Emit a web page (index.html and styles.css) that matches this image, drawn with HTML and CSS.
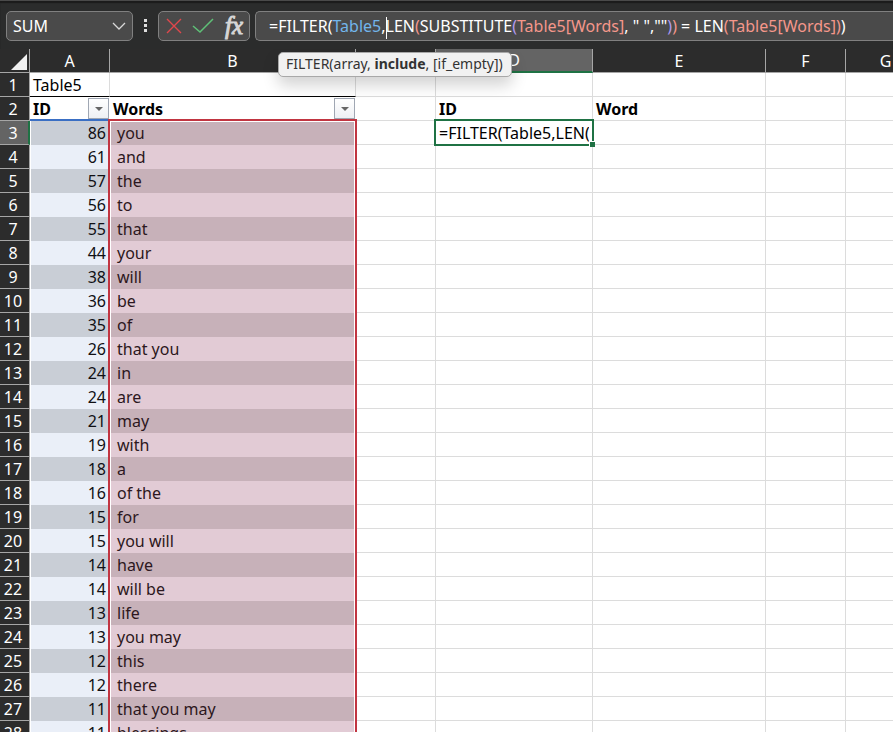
FILE: index.html
```html
<!DOCTYPE html>
<html lang="en">
<head>
<meta charset="utf-8">
<title>Table5</title>
<link rel="stylesheet" href="styles.css">
</head>
<body>
<header class="bar">
  <div class="box name">
    <input class="name-input" aria-label="Name box" value="SUM">
    <button class="plain" aria-label="Show names"><svg width="14" height="8" viewBox="0 0 14 8"><path d="M1 1l6 6 6-6" fill="none" stroke="#d8d8d8" stroke-width="1.3"/></svg></button>
  </div>
  <svg class="grip" width="3" height="14" viewBox="0 0 3 14"><path d="M0 0h3v3H0zM0 5h3v3H0zM0 10h3v3H0z" fill="#dedede"/></svg>
  <div class="box tools">
    <button class="plain" aria-label="Cancel"><svg width="16" height="16" viewBox="0 0 16 16"><path d="M1 1l14 14M15 1L1 15" fill="none" stroke="#e0474c" stroke-width="1.4"/></svg></button>
    <button class="plain" aria-label="Enter"><svg width="22" height="16" viewBox="0 0 22 16"><path d="M1 8l7 6L21 1" fill="none" stroke="#5fc077" stroke-width="1.5"/></svg></button>
    <button class="plain fx" aria-label="Insert function">fx</button>
  </div>
  <div class="box formula" role="textbox" aria-label="Formula bar" contenteditable="true" spellcheck="false">=FILTER(<span class="blue">Table5</span>,<i class="caret"></i>LEN<span class="red">(</span>SUBSTITUTE<span class="violet">(</span><span class="red">Table5[Words]</span>, " ",""<span class="violet">)</span><span class="red">)</span> = LEN<span class="red">(Table5[Words])</span>)</div>
</header>
<main class="sheet">
  <div class="hint" role="tooltip">FILTER(array, <b>include</b>, [if_empty])</div>
  <table>
    <colgroup><col class="w-row"><col class="w-s"><col class="w-b"><col class="w-s"><col class="w-d"><col class="w-e"><col class="w-s"><col class="w-s"></colgroup>
    <thead><tr><th class="corner"><svg width="16" height="16" viewBox="0 0 16 16"><path d="M16 0v16H0z" fill="#f0f0f0"/></svg></th><th>A</th><th>B</th><th>C</th><th class="on">D</th><th>E</th><th>F</th><th>G</th></tr></thead>
    <tbody id="rows">
      <tr class="title"><th>1</th><td>Table5</td><td></td><td></td><td></td><td></td><td></td><td></td></tr>
      <tr class="heads"><th>2</th><td>ID<button class="filter" aria-label="Filter ID"></button></td><td>Words<button class="filter" aria-label="Filter Words"></button></td><td></td><td>ID</td><td>Word</td><td></td><td></td></tr>
    </tbody>
  </table>
</main>
<script src="script.js"></script>
</body>
</html>
```
FILE: styles.css
```css
* { box-sizing: border-box; }
body {
  margin: 0;
  height: 100vh;
  overflow: hidden;
  display: flex;
  flex-direction: column;
  background: #fff;
  font-family: "Noto Sans", sans-serif;
  font-size: 16px;
  line-height: 20px;
}
.bar {
  flex: none;
  display: flex;
  align-items: center;
  padding: 10px 0 8px 6px;
  background: #2b2c2c;
  border-top: 1px solid #4a4a4a;
  box-shadow: inset 0 2px 1px #1b1b1b;
  color: #fff;
}
.box {
  display: flex;
  align-items: center;
  height: 30px;
  border: 1px solid #808080;
  border-radius: 5px;
  background: #4a4a4a;
}
.name { width: 127px; padding: 0 6px; }
.name-input {
  flex: 1;
  min-width: 0;
  padding: 0;
  border: 0;
  outline: 0;
  background: none;
  color: #fff;
  font: inherit;
}
.plain {
  display: flex;
  padding: 0;
  border: 0;
  background: none;
  color: #d6d6d6;
}
.grip { margin: 0 11px; }
.tools { width: 92px; padding: 0 6px 0 7px; justify-content: space-between; }
.fx { font: italic 25px/24px "Liberation Serif", serif; -webkit-text-stroke: 1px #d6d6d6; }
.formula {
  flex: 1;
  display: block;
  margin-left: 5px;
  padding: 4px 13px;
  border-right: 0;
  border-radius: 5px 0 0 5px;
  white-space: pre;
  overflow: hidden;
}
.blue { color: #72b5ec; }
.red { color: #f5978b; }
.violet { color: #b29af0; }
.caret {
  display: inline-block;
  width: 1px;
  height: 22px;
  margin: -2px -1px -2px 0;
  vertical-align: middle;
  background: #fff;
}
.sheet { flex: 1; min-height: 0; position: relative; overflow: hidden; }
.hint {
  position: absolute;
  z-index: 3;
  left: 278px;
  top: 3px;
  padding: 1px 8px 2px 7px;
  border: 1px solid #a8a8a8;
  border-radius: 5px;
  background: #f1f1f1;
  box-shadow: 0 8px 16px rgba(0, 0, 0, .18);
  color: #333;
  font-size: 14px;
  line-height: 20px;
  white-space: nowrap;
}
table { width: 926px; table-layout: fixed; border-collapse: separate; border-spacing: 0; }
.w-row { width: 30px; }
.w-s { width: 80px; }
.w-b { width: 246px; }
.w-d { width: 157px; }
.w-e { width: 173px; }
td, th {
  height: 24px;
  padding: 0 3px;
  border: 0 solid #dcdcdc;
  border-width: 0 1px 1px 0;
  line-height: 22px;
  text-align: left;
  white-space: nowrap;
}
th {
  background: #2c2c2c;
  border-color: #a6a6a6;
  color: #fff;
  font-weight: 400;
  text-align: center;
}
tbody th { padding: 0 3px 0 0; }
.corner { padding: 0 2px 2px 0; text-align: right; vertical-align: bottom; }
.corner svg { display: block; margin-left: auto; }
thead .on { background: #646464; border-bottom: 2px solid #1f7244; line-height: 21px; }
tbody .on { background: #646464; border-right: 2px solid #1f7244; padding-right: 2px; }
.title td:nth-child(2), .title td:nth-child(3) { border-bottom-color: #000; }
.heads td { position: relative; font-weight: 700; }
.heads td:nth-child(2), .heads td:nth-child(3) { border-right-color: #fff; }
.filter {
  position: absolute;
  right: 0;
  top: 1px;
  width: 21px;
  height: 21px;
  padding: 0;
  border: 1px solid #a0a7b3;
  background: linear-gradient(#fff, #eef0f4);
}
.filter::before {
  content: "";
  display: block;
  width: 0;
  margin: 0 auto;
  border: 4px solid transparent;
  border-top-color: #666;
  border-bottom: 0;
}
.data td:nth-child(2), .data td:nth-child(3) { border: 0; color: #101014; }
.data td:nth-child(2) { background: #eaeff8; border-left: 1px solid #fff; text-align: right; padding-right: 4px; }
.data td:nth-child(3) { background: #e2cbd5; padding-left: 7px; color: #2c1720; }
.data:nth-child(odd) td:nth-child(2) { background: #c9ced6; }
.data:nth-child(odd) td:nth-child(3) { background: #c7b1b9; }
.data td { position: relative; }
.range {
  position: absolute;
  z-index: 1;
  top: -2px;
  left: -2px;
  right: -1px;
  height: 100vh;
  border: 2px solid #c13541;
  box-shadow: inset 0 0 0 1px #fff;
  pointer-events: none;
}
.edge { position: absolute; top: -2px; left: -1px; right: 0; height: 2px; background: #3a6fc4; }
.edit {
  position: absolute;
  z-index: 2;
  top: -2px;
  left: -2px;
  width: calc(100% + 4px);
  height: 27px;
  padding: 0 3px;
  border: 2px solid #1f7244;
  outline: 0;
  background: #fff;
  color: #000;
  font: inherit;
}
.handle {
  position: absolute;
  z-index: 3;
  right: -3px;
  bottom: -3px;
  width: 6px;
  height: 6px;
  border: 1px solid #fff;
  border-width: 1px 0 0 1px;
  background: #1f7244;
}
```
FILE: script.js
```js
const words = [
  [86, "you"], [61, "and"], [57, "the"], [56, "to"], [55, "that"], [44, "your"],
  [38, "will"], [36, "be"], [35, "of"], [26, "that you"], [24, "in"], [24, "are"],
  [21, "may"], [19, "with"], [18, "a"], [16, "of the"], [15, "for"], [15, "you will"],
  [14, "have"], [14, "will be"], [13, "life"], [13, "you may"], [12, "this"],
  [12, "there"], [11, "that you may"], [11, "blessings"]
];
document.getElementById("rows").insertAdjacentHTML("beforeend", words.map(([id, word], i) => {
  const first = i === 0;
  return `<tr class="data"><th${first ? ' class="on"' : ""}>${i + 3}</th>` +
    `<td>${id}${first ? '<i class="edge"></i>' : ""}</td>` +
    `<td>${word}${first ? '<i class="range"></i>' : ""}</td><td></td>` +
    `<td>${first ? '<input class="edit" aria-label="Cell D3" value="=FILTER(Table5,LEN("><i class="handle"></i>' : ""}</td>` +
    `<td></td><td></td><td></td></tr>`;
}).join(""));
```
